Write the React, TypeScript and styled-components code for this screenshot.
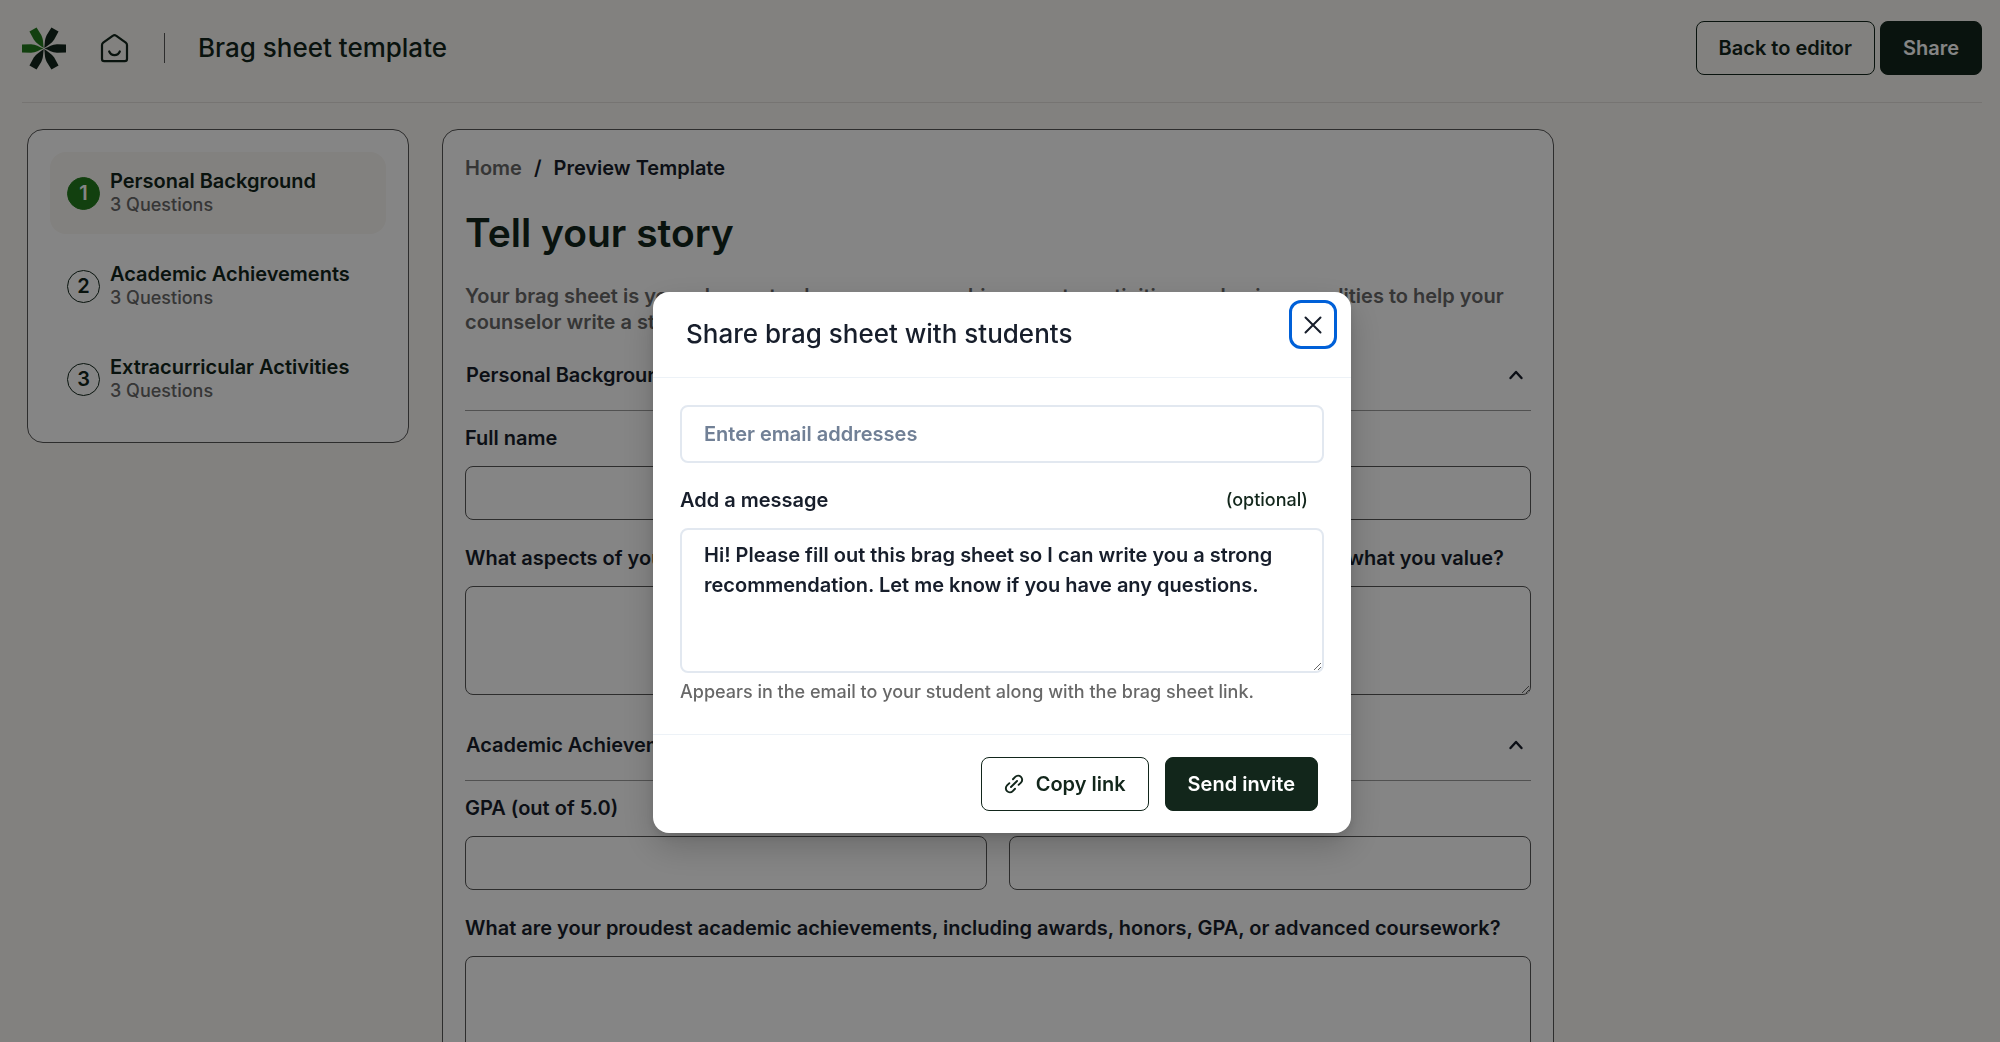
import React from "react";
import styled, { createGlobalStyle, css } from "styled-components";

const color = {
  page: "#faf7f3",
  card: "#ffffff",
  forest: "#12261b",
  green: "#247c1e",
  ink: "#171e2b",
  muted: "#686868",
  outline: "#565656",
  rule: "#9c9c9c",
  headerRule: "#e2dfdb",
  field: "#e2e8f0",
  fieldRule: "#edf2f7",
  placeholder: "#718096",
  focus: "#0060d8",
};

const GlobalStyle = createGlobalStyle`
  *, *::before, *::after { box-sizing: border-box; }
  html, body { height: 100%; }
  body {
    margin: 0;
    overflow: hidden;
    background: ${color.page};
    color: ${color.ink};
    font-family: Inter, "Liberation Sans", sans-serif;
    font-size: 20px;
    font-weight: 600;
    line-height: 26px;
  }
  button, input, textarea { font: inherit; color: inherit; }
  h1, h2, p, ol { margin: 0; padding: 0; font-weight: inherit; }
`;

const Header = styled.header`
  display: flex;
  align-items: center;
  margin: 0 18px 0 22px;
  padding: 21px 0 27px;
  border-bottom: 1px solid ${color.headerRule};
`;

const HomeLink = styled.a`
  display: flex;
  margin-left: 33px;
  color: ${color.forest};
`;

const Divider = styled.span`
  width: 1px;
  height: 30px;
  margin: 0 33px 0 34px;
  background: ${color.outline};
`;

const DocumentTitle = styled.h1`
  flex: 1;
  font-size: 26px;
  font-weight: 500;
  color: ${color.forest};
`;

const Actions = styled.div`
  display: flex;
  gap: 5px;
`;

const Button = styled.button<{ $solid?: boolean }>`
  display: flex;
  align-items: center;
  gap: 12px;
  height: 54px;
  padding: 0 22px;
  border: 1px solid ${color.forest};
  border-radius: 8px;
  white-space: nowrap;
  cursor: pointer;
  background: ${(p) => (p.$solid ? color.forest : "transparent")};
  color: ${(p) => (p.$solid ? "#fff" : color.forest)};
`;

const Layout = styled.div`
  display: flex;
  align-items: flex-start;
  gap: 33px;
  padding: 26px 27px 0;
`;

const panel = css`
  background: ${color.card};
  border: 1px solid ${color.outline};
  border-radius: 16px;
`;

const Sidebar = styled.nav`
  ${panel}
  flex: 0 0 382px;
  padding: 22px;
`;

const StepList = styled.ol`
  display: grid;
  gap: 11px;
  list-style: none;
`;

const StepLink = styled.a<{ $active?: boolean }>`
  display: flex;
  align-items: center;
  gap: 10px;
  height: 82px;
  padding: 0 17px;
  border-radius: 16px;
  text-decoration: none;
  color: ${color.forest};
  background: ${(p) => (p.$active ? color.page : "transparent")};
`;

const StepNumber = styled.span<{ $active?: boolean }>`
  display: grid;
  place-items: center;
  width: 33px;
  height: 33px;
  border: 1px solid ${(p) => (p.$active ? color.green : color.forest)};
  border-radius: 50%;
  background: ${(p) => (p.$active ? color.green : "transparent")};
  color: ${(p) => (p.$active ? "#fff" : color.forest)};
`;

const StepText = styled.span`
  display: grid;
  line-height: 24px;
`;

const StepCount = styled.span`
  font-size: 18px;
  font-weight: 500;
  color: ${color.muted};
`;

const Main = styled.main`
  ${panel}
  flex: 0 1 1112px;
  padding: 22px;
`;

const Breadcrumb = styled.nav`
  display: flex;
  gap: 12px;
  line-height: 32px;
`;

const CrumbLink = styled.a`
  color: ${color.muted};
  text-decoration: none;
`;

const PageTitle = styled.h2`
  margin: 25px 0 26px;
  font-size: 39px;
  line-height: 48px;
  color: ${color.forest};
`;

const Intro = styled.p`
  color: ${color.muted};
`;

const Section = styled.section`
  margin-top: 5px;

  & + & {
    margin-top: 15px;
  }
`;

const SectionHeading = styled.button`
  display: flex;
  align-items: center;
  justify-content: space-between;
  width: 100%;
  height: 71px;
  padding: 0 5px 0 1px;
  border: 0;
  border-bottom: 1px solid ${color.rule};
  background: none;
  text-align: left;
  cursor: pointer;
`;

const Field = styled.div`
  margin-top: 14px;

  & + & {
    margin-top: 25px;
  }
`;

const Label = styled.label`
  display: block;
  white-space: nowrap;
`;

const InputRow = styled.div`
  display: flex;
  gap: 22px;
  margin-top: 15px;
`;

const fieldBox = css`
  display: block;
  width: 100%;
  min-width: 0;
  border-radius: 8px;
  background: transparent;
  outline: none;
`;

const Input = styled.input`
  ${fieldBox}
  height: 54px;
  padding: 0 22px;
  border: 1px solid ${color.outline};
`;

const TextArea = styled.textarea`
  ${fieldBox}
  height: 109px;
  padding: 12px 22px;
  border: 1px solid ${color.outline};
`;

const Backdrop = styled.div`
  position: fixed;
  inset: 0;
  display: flex;
  align-items: flex-start;
  justify-content: center;
  padding: 292px 16px 16px 20px;
  background: rgba(0, 0, 0, 0.48);
`;

const Dialog = styled.div`
  position: relative;
  flex: 0 1 698px;
  border-radius: 16px;
  background: #fff;
  box-shadow: 0 14px 34px rgba(0, 0, 0, 0.2), 0 4px 8px rgba(0, 0, 0, 0.1);
`;

const DialogHeader = styled.div`
  padding: 26px 33px 28px;
  border-bottom: 1px solid ${color.fieldRule};
`;

const DialogTitle = styled.h2`
  font-size: 26px;
  font-weight: 500;
  line-height: 31px;
`;

const CloseButton = styled.button`
  position: absolute;
  top: 8px;
  right: 14px;
  display: grid;
  place-items: center;
  width: 48px;
  height: 49px;
  padding: 0;
  border: 3px solid ${color.focus};
  border-radius: 12px;
  background: none;
  cursor: pointer;
`;

const DialogBody = styled.div`
  padding: 27px 27px 29px;
`;

const EmailInput = styled(Input)`
  height: 58px;
  border: 2px solid ${color.field};

  &::placeholder {
    color: ${color.placeholder};
    opacity: 1;
  }
`;

const LabelRow = styled.div`
  display: flex;
  justify-content: space-between;
  align-items: center;
  padding: 24px 16px 15px 0;
`;

const Optional = styled.span`
  font-size: 18px;
  font-weight: 500;
  color: ${color.forest};
`;

const MessageArea = styled(TextArea)`
  height: 145px;
  border: 2px solid ${color.field};
  line-height: 30px;
  padding-top: 10px;
`;

const Help = styled.p`
  margin-top: 6px;
  font-size: 18px;
  font-weight: 500;
  color: ${color.muted};
`;

const DialogFooter = styled.div`
  display: flex;
  justify-content: flex-end;
  gap: 16px;
  padding: 22px 33px;
  border-top: 1px solid ${color.fieldRule};
`;

const Petal = ({ angle, fill }: { angle: number; fill: string }) => (
  <path
    d="M21.500 21.500 C17 19.800 14 17.400 9 17.200 L0 17.400 L0 25.600 L9 25.800 C14 25.600 17 23.200 21.500 21.500Z"
    fill={fill}
    transform={`rotate(${angle} 22 21.5)`}
  />
);

const Logo = () => (
  <svg width="44" height="43" viewBox="0 0 44 43" aria-hidden="true">
    {[0, 60, 120, 180, 240, 300].map((angle) => (
      <Petal key={angle} angle={angle} fill={angle < 120 ? color.green : color.forest} />
    ))}
  </svg>
);

const HomeIcon = () => (
  <svg width="31" height="32" viewBox="0 0 31 32" fill="none" stroke="currentColor" strokeWidth="2.2" strokeLinecap="round" strokeLinejoin="round" aria-hidden="true">
    <path d="M3 13c0-1 .4-1.700 1.200-2.300L14 3.600c.9-.7 2.100-.7 3 0l9.800 7.100C27.600 11.300 28 12 28 13v14c0 1.300-.9 2.200-2.200 2.200H5.200C3.900 29.200 3 28.300 3 27Z" />
    <path d="M10.200 19.500c1 2.400 2.900 3.600 5.300 3.600s4.300-1.200 5.300-3.600" />
  </svg>
);

const ChevronUp = () => (
  <svg width="20" height="20" viewBox="0 0 20 20" fill="none" stroke="currentColor" strokeWidth="2.4" strokeLinecap="round" strokeLinejoin="round" aria-hidden="true">
    <path d="M4.500 13 10 7l5.500 6" />
  </svg>
);

const CloseIcon = () => (
  <svg width="18" height="18" viewBox="0 0 18 18" stroke="currentColor" strokeWidth="2" strokeLinecap="round" aria-hidden="true">
    <path d="M1.500 1.500l15 15M16.500 1.500l-15 15" />
  </svg>
);

const LinkIcon = () => (
  <svg width="20" height="20" viewBox="0 0 21 21" fill="none" stroke="currentColor" strokeWidth="2" strokeLinecap="round" aria-hidden="true">
    <path d="M7.300 13.700l6.400-6.400" />
    <path d="M9.400 5.500l2.400-2.500c1.700-1.700 4.300-1.700 6 0s1.700 4.300 0 6l-2.500 2.400" />
    <path d="M11.600 15.500l-2.400 2.500c-1.700 1.700-4.300 1.700-6 0s-1.700-4.300 0-6l2.500-2.400" />
  </svg>
);

const steps = ["Personal Background", "Academic Achievements", "Extracurricular Activities"];

export default function App() {
  return (
    <>
      <GlobalStyle />
      <Header>
        <Logo />
        <HomeLink href="#home" aria-label="Home">
          <HomeIcon />
        </HomeLink>
        <Divider />
        <DocumentTitle>Brag sheet template</DocumentTitle>
        <Actions>
          <Button type="button">Back to editor</Button>
          <Button type="button" $solid>Share</Button>
        </Actions>
      </Header>

      <Layout>
        <Sidebar aria-label="Sections">
          <StepList>
            {steps.map((title, i) => (
              <li key={title}>
                <StepLink href={`#section-${i + 1}`} $active={i === 0}>
                  <StepNumber $active={i === 0}>{i + 1}</StepNumber>
                  <StepText>
                    {title}
                    <StepCount>3 Questions</StepCount>
                  </StepText>
                </StepLink>
              </li>
            ))}
          </StepList>
        </Sidebar>

        <Main>
          <Breadcrumb aria-label="Breadcrumb">
            <CrumbLink href="#home">Home</CrumbLink>
            <span>/</span>
            <span>Preview Template</span>
          </Breadcrumb>
          <PageTitle>Tell your story</PageTitle>
          <Intro>
            Your brag sheet is your chance to showcase your achievements, activities, and unique qualities to help your
            counselor write a strong recommendation.
          </Intro>

          <Section id="section-1">
            <SectionHeading type="button" aria-expanded="true">
              Personal Background
              <ChevronUp />
            </SectionHeading>
            <Field>
              <Label htmlFor="full-name">Full name</Label>
              <InputRow>
                <Input id="full-name" />
              </InputRow>
            </Field>
            <Field>
              <Label htmlFor="aspects">
                What aspects of your personal background or identity have shaped who you are today, and what you value?
              </Label>
              <InputRow>
                <TextArea id="aspects" />
              </InputRow>
            </Field>
          </Section>

          <Section id="section-2">
            <SectionHeading type="button" aria-expanded="true">
              Academic Achievements
              <ChevronUp />
            </SectionHeading>
            <Field>
              <Label htmlFor="gpa">GPA (out of 5.0)</Label>
              <InputRow>
                <Input id="gpa" />
                <Input aria-label="GPA scale" />
              </InputRow>
            </Field>
            <Field>
              <Label htmlFor="proudest">
                What are your proudest academic achievements, including awards, honors, GPA, or advanced coursework?
              </Label>
              <InputRow>
                <TextArea id="proudest" />
              </InputRow>
            </Field>
          </Section>
        </Main>
      </Layout>

      <Backdrop>
        <Dialog role="dialog" aria-modal="true" aria-labelledby="share-title">
          <DialogHeader>
            <DialogTitle id="share-title">Share brag sheet with students</DialogTitle>
          </DialogHeader>
          <CloseButton type="button" aria-label="Close">
            <CloseIcon />
          </CloseButton>
          <DialogBody>
            <EmailInput type="email" placeholder="Enter email addresses" aria-label="Email addresses" />
            <LabelRow>
              <Label htmlFor="message">Add a message</Label>
              <Optional>(optional)</Optional>
            </LabelRow>
            <MessageArea
              id="message"
              defaultValue="Hi! Please fill out this brag sheet so I can write you a strong recommendation. Let me know if you have any questions."
            />
            <Help>Appears in the email to your student along with the brag sheet link.</Help>
          </DialogBody>
          <DialogFooter>
            <Button type="button">
              <LinkIcon />
              Copy link
            </Button>
            <Button type="button" $solid>Send invite</Button>
          </DialogFooter>
        </Dialog>
      </Backdrop>
    </>
  );
}
